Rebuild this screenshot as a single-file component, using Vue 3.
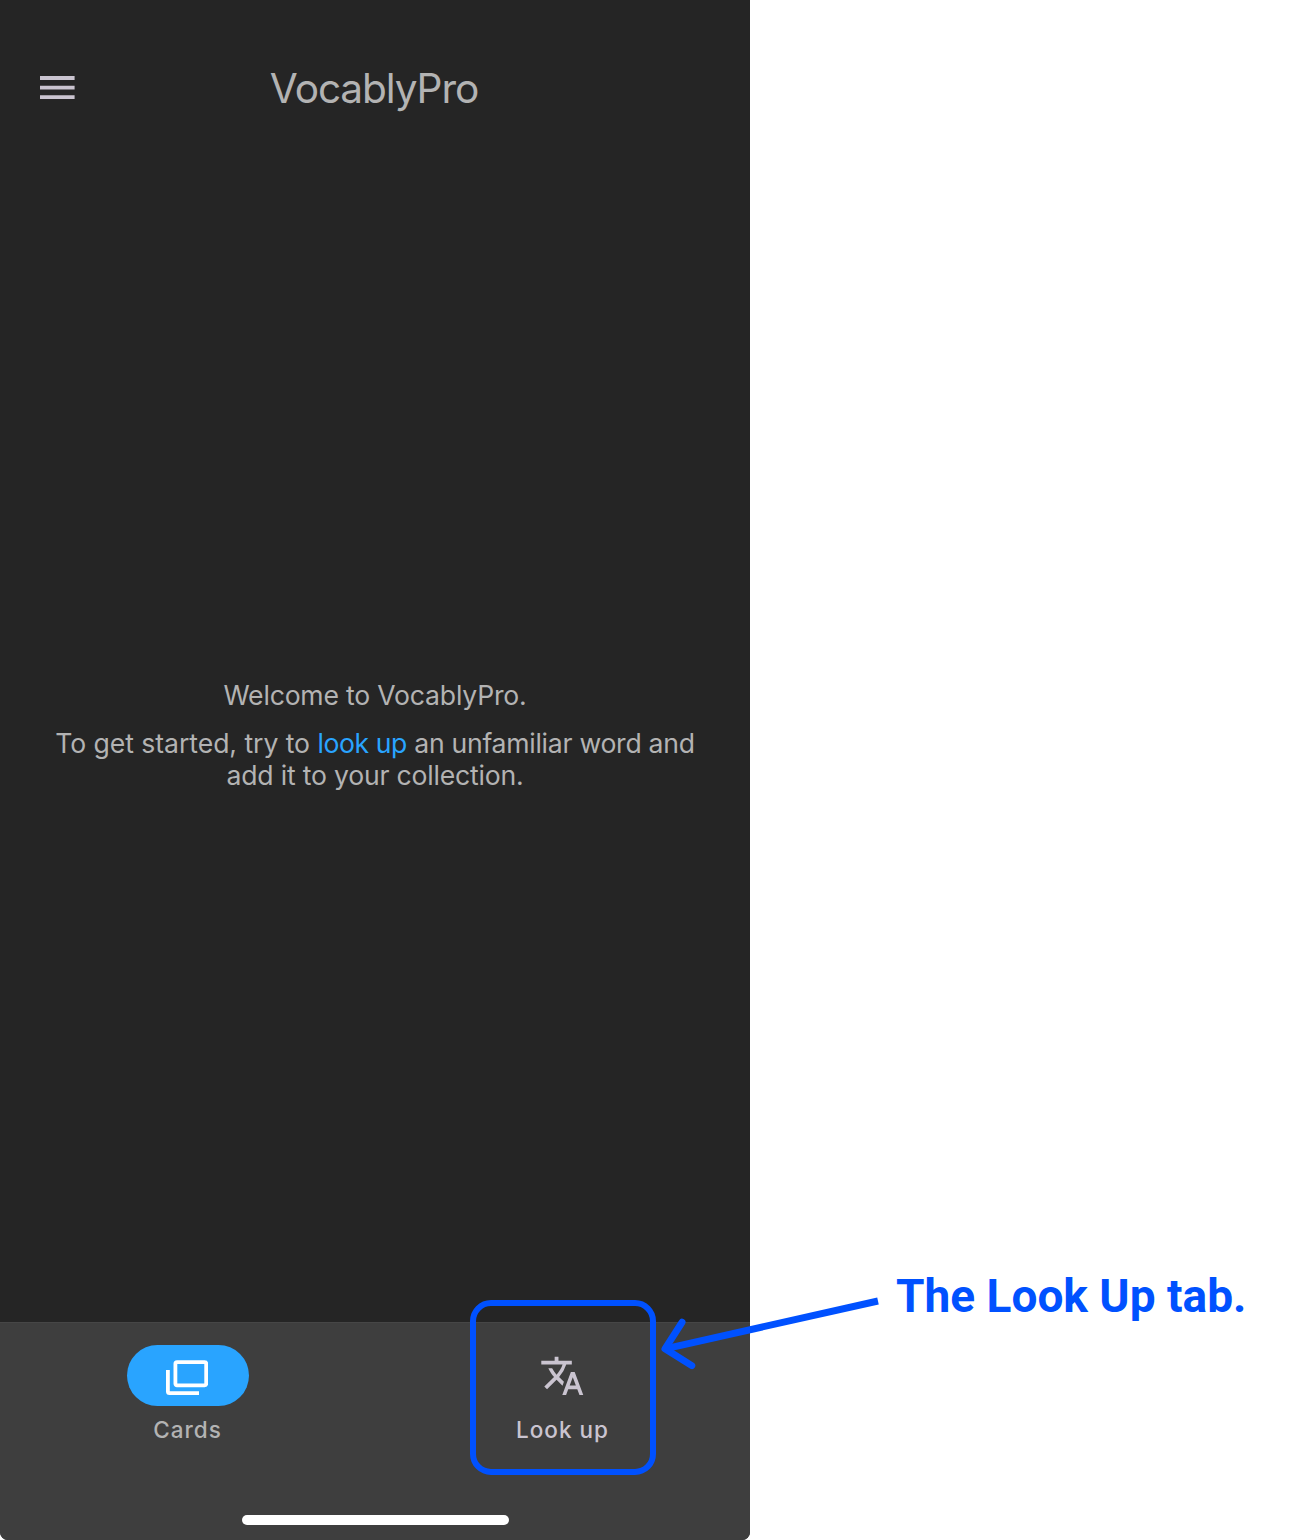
<script setup>
const title = 'VocablyPro'
</script>

<template>
  <div class="page">
    <main class="phone">
      <header class="bar">
        <svg class="menu" viewBox="0 0 46 46"><path d="M6 12.1H40.6V15.9H6ZM6 21.7H40.6V25.6H6ZM6 31.2H40.6V35.1H6Z" /></svg>
        <h1 class="title"><span>{{ title }}</span></h1>
      </header>
      <section class="welcome">
        <p class="hello"><span>Welcome to {{ title }}.</span></p>
        <p class="hint"><span class="lead">To get started, try to </span><a class="link">look up</a><span class="rest"> an unfamiliar word and</span><br /><span>add it to your collection.</span></p>
      </section>
      <footer class="footer">
        <nav class="tabs">
          <div class="tab">
            <div class="pill active">
              <svg class="cards" viewBox="0 0 42 35" fill="none" stroke="#fff" stroke-width="3.8">
                <rect x="9.4" y="2.1" width="30.8" height="23.2" rx="1.6" />
                <path d="M1.9 10V31.5Q1.9 33.1 3.5 33.1H33" />
              </svg>
            </div>
            <span class="label">Cards</span>
          </div>
          <div class="tab lookup">
            <div class="pill">
              <svg class="translate" viewBox="-0.2 0 24 24"><path d="M12.87 15.07l-2.54-2.51.03-.03A17.52 17.52 0 0 0 14.07 6H17V4h-7V2H8v2H1v2h11.17C11.5 7.92 10.44 9.75 9 11.35 8.07 10.32 7.3 9.19 6.69 8h-2c.73 1.63 1.73 3.17 2.98 4.56l-5.09 5.02L4 19l5-5 3.11 3.11.76-2.04zM18.5 10h-2L12 22h2l1.12-3h4.75L21 22h2l-4.5-12zm-2.62 7l1.62-4.33L19.12 17h-3.24z" /></svg>
            </div>
            <span class="label">Look up</span>
          </div>
        </nav>
        <div class="home"></div>
      </footer>
    </main>
    <aside class="note"><span>The Look Up tab.</span></aside>
    <div class="highlight"></div>
    <svg class="arrow" viewBox="650 1290 240 90" fill="none" stroke="#0051ff" stroke-width="7">
      <path d="M878 1301L665 1348.8" />
      <path d="M682 1322.3L665 1348.8L691.8 1365.6" stroke-linecap="round" stroke-linejoin="round" />
    </svg>
  </div>
</template>

<style>
body {
  margin: 0;
  background: #fff;
}
</style>

<style scoped>
.page {
  position: relative;
  display: flex;
  width: 1300px;
  height: 1540px;
  overflow: hidden;
  background: #fff;
  font-family: Inter, "Liberation Sans", sans-serif;
}
.phone {
  display: flex;
  flex-direction: column;
  width: 750px;
  height: 1540px;
  overflow: hidden;
  border-radius: 0 0 8px 8px;
  background: #252525;
  color: #b3b3b3;
}
.bar {
  display: grid;
  grid-template-columns: 80px 1fr 80px;
  height: 176px;
}
.menu {
  width: 46px;
  height: 46px;
  margin: 64px 0 0 34px;
  fill: #cac4d0;
}
.title {
  margin: 63px 2px 0 0;
  font-size: 40.6px;
  line-height: 52px;
  font-weight: 400;
  text-align: center;
  letter-spacing: -1.1px;
}
.welcome {
  flex: 1;
  padding-top: 503px;
  font-size: 26.6px;
  line-height: 32px;
  text-align: center;
  letter-spacing: -0.2px;
  white-space: nowrap;
}
.welcome p {
  margin: 0 0 16px;
}
.lead {
  letter-spacing: -0.06px;
}
.link {
  color: #29a4ff;
  letter-spacing: -0.4px;
}
.rest {
  letter-spacing: -0.27px;
}
.footer {
  display: flex;
  flex-direction: column;
  justify-content: space-between;
  align-items: center;
  box-sizing: border-box;
  height: 218px;
  padding: 22px 0 15px;
  border-top: 1px solid #464646;
  background: #3e3e3e;
}
.tabs {
  display: flex;
  width: 100%;
}
.tab {
  display: flex;
  flex: 1;
  flex-direction: column;
  align-items: center;
}
.pill {
  display: flex;
  justify-content: center;
  width: 122px;
  height: 61.4px;
  border-radius: 31px;
}
.active {
  background: #29a4ff;
}
.cards {
  width: 42px;
  height: 35px;
  margin: 15px 0 0 -1px;
}
.translate {
  width: 45.8px;
  height: 45.8px;
  margin: 8.2px 1px 0 0;
  fill: #cac4d0;
}
.label {
  margin-top: 8px;
  font-size: 22.5px;
  line-height: 31px;
  font-weight: 500;
  letter-spacing: 1px;
}
.lookup {
  color: #cac4d0;
}
.home {
  width: 267px;
  height: 10px;
  border-radius: 5px;
  background: #fff;
}
.note {
  margin: 1266px 0 0 146px;
  color: #0051ff;
  font-family: Roboto, sans-serif;
  font-size: 46px;
  line-height: 60px;
  font-weight: 700;
  white-space: nowrap;
}
.highlight {
  position: absolute;
  top: 1300px;
  left: 470px;
  box-sizing: border-box;
  width: 186px;
  height: 175px;
  border: 6px solid #0051ff;
  border-radius: 21px;
}
.arrow {
  position: absolute;
  top: 1290px;
  left: 650px;
  width: 240px;
  height: 90px;
}
</style>
